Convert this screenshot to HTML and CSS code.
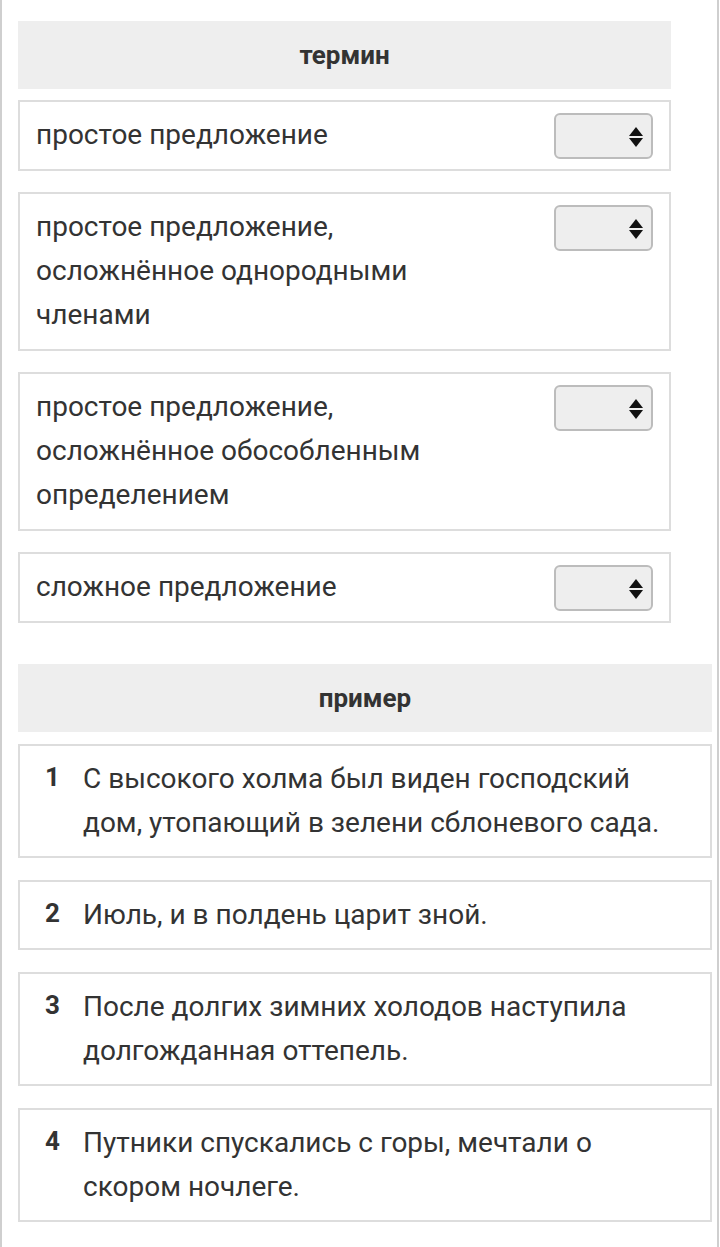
FILE: index.html
```html
<!DOCTYPE html>
<html lang="ru">
<head>
<meta charset="utf-8">
<link rel="stylesheet" href="styles.css">
</head>
<body>
<div class="page">
  <div class="terms">
    <div class="head">термин</div>
    <div class="trow">
      <div class="ttext">простое предложение</div>
      <div class="sel"><span class="arr"></span></div>
    </div>
    <div class="trow">
      <div class="ttext">простое предложение, осложнённое однородными членами</div>
      <div class="sel"><span class="arr"></span></div>
    </div>
    <div class="trow">
      <div class="ttext">простое предложение, осложнённое обособленным определением</div>
      <div class="sel"><span class="arr"></span></div>
    </div>
    <div class="trow">
      <div class="ttext">сложное предложение</div>
      <div class="sel"><span class="arr"></span></div>
    </div>
  </div>

  <div class="examples">
    <div class="head">пример</div>
    <div class="erow">
      <div class="num">1</div>
      <div class="etext">С высокого холма был виден господский дом, утопающий в зелени сблоневого сада.</div>
    </div>
    <div class="erow">
      <div class="num">2</div>
      <div class="etext">Июль, и в полдень царит зной.</div>
    </div>
    <div class="erow">
      <div class="num">3</div>
      <div class="etext">После долгих зимних холодов наступила долгожданная оттепель.</div>
    </div>
    <div class="erow">
      <div class="num">4</div>
      <div class="etext">Путники спускались с горы, мечтали о скором ночлеге.</div>
    </div>
  </div>
</div>
</body>
</html>
```

FILE: styles.css
```css
html, body {
  margin: 0;
  padding: 0;
  background: #fff;
}
body {
  font-family: Roboto, "Liberation Sans", sans-serif;
  color: #333;
}
.page {
  width: 719px;
  min-height: 1247px;
  box-sizing: border-box;
  border-left: 2px solid #cfcfcf;
  border-right: 2px solid #cfcfcf;
  padding: 21px 0 0 16px;
}
.terms {
  width: 653px;
  display: flex;
  flex-direction: column;
  gap: 21px;
}
.examples {
  width: 694px;
  margin-top: 41px;
  display: flex;
  flex-direction: column;
  gap: 22px;
}
.head {
  height: 68px;
  background: #eee;
  display: flex;
  align-items: center;
  justify-content: center;
  font-weight: bold;
  font-size: 26px;
  margin-bottom: -10px;
}
.trow {
  border: 2px solid #ddd;
  padding: 11px 16px 12px 16px;
  display: flex;
  align-items: flex-start;
  font-size: 28px;
  line-height: 44px;
}
.ttext {
  width: 440px;
}
.sel {
  margin-left: auto;
  margin-bottom: -2px;
  width: 99px;
  height: 46px;
  box-sizing: border-box;
  background: #eee;
  border: 2px solid #bcbcbc;
  border-radius: 6px;
  position: relative;
}
.arr {
  position: absolute;
  right: 8px;
  top: 12px;
  width: 0;
  height: 0;
  border-left: 7px solid transparent;
  border-right: 7px solid transparent;
  border-bottom: 9px solid #111;
}
.arr::after {
  content: "";
  position: absolute;
  left: -7px;
  top: 11px;
  width: 0;
  height: 0;
  border-left: 7px solid transparent;
  border-right: 7px solid transparent;
  border-top: 9px solid #111;
}
.erow {
  border: 2px solid #ddd;
  padding: 11px 37px 11px 25px;
  display: flex;
  align-items: flex-start;
  font-size: 28px;
  line-height: 44px;
}
.num {
  width: 38px;
  flex: none;
  font-weight: bold;
  font-size: 26px;
  line-height: 40px;
}
.etext {
  flex: 1;
}
```
